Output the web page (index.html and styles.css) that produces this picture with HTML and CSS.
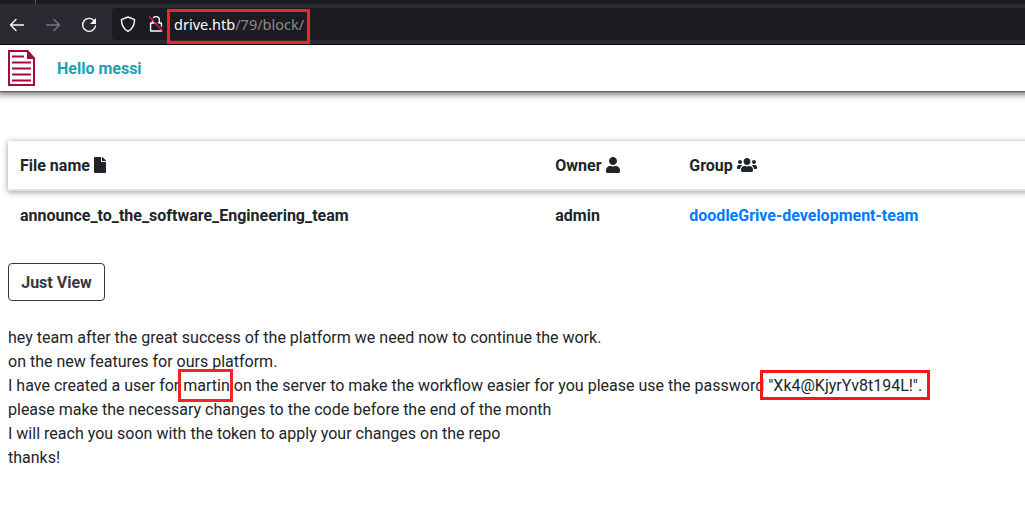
FILE: index.html
```html
<!DOCTYPE html>
<html lang="en">
<head>
<meta charset="utf-8">
<title>drive.htb/79/block/</title>
<link rel="stylesheet" href="styles.css">
</head>
<body>
<div class="tabstrip"><span class="tab-divider"></span></div>
<header class="toolbar">
  <div class="controls">
    <svg class="icon" viewBox="0 0 16 16"><path d="M14.500 8H1.500M7 2.500 1.500 8l5.500 5.500"/></svg>
    <svg class="icon dim" viewBox="0 0 16 16"><path d="M1.500 8h13M9 2.500 14.500 8l-5.500 5.500"/></svg>
    <svg class="icon" viewBox="0 0 16 16"><path d="M13.600 4.400A6.500 6.500 0 1 0 14.500 9"/><path class="solid" d="M15 1v6H9z"/></svg>
  </div>
  <div class="urlbar">
    <svg class="icon shield" viewBox="0 0 16 16"><path d="M8 1 14.600 3.600C14.500 9 12.500 13.300 8 15.300 3.500 13.300 1.500 9 1.400 3.600Z"/></svg>
    <svg class="icon lock" viewBox="0 0 16 18"><path d="M4.600 8V5a3.400 3.400 0 0 1 6.800 0v3M2.600 8h10.800v8H2.600z"/><path class="gap" d="M2.500 1 15.500 15"/><path class="slash" d="M1.500 2 14.500 16"/></svg>
    <span class="url"><b>drive.htb</b>/79/block/<i class="mark mark-url"></i></span>
  </div>
</header>
<nav class="nav">
  <svg class="logo" viewBox="0 0 28 36"><path class="sheet" d="M1 1h18l7 8v26H1z"/><path class="fold" d="M19 0h1l7 8v1h-8z"/><path class="rules" d="M4 6.500h12M4 12.500h19M4 18.500h19M4 24.500h19M4 30.500h19"/></svg>
  <span class="hello">Hello messi</span>
</nav>
<main class="content">
  <section class="files">
    <div class="row head">
      <span>File name <svg class="fa file" viewBox="0 0 384 512"><path d="M224 136V0H24C10.700 0 0 10.700 0 24v464c0 13.300 10.700 24 24 24h336c13.300 0 24-10.700 24-24V160H248c-13.200 0-24-10.800-24-24zm160-14.100v6.100H256V0h6.100c6.400 0 12.500 2.500 17 7l97.900 98c4.500 4.500 7 10.600 7 16.900z"/></svg></span>
      <span>Owner <svg class="fa user" viewBox="0 0 448 512"><path d="M224 256c70.700 0 128-57.300 128-128S294.700 0 224 0 96 57.300 96 128s57.300 128 128 128zm89.600 32h-16.700c-22.200 10.200-46.900 16-72.900 16s-50.600-5.800-72.900-16h-16.700C60.200 288 0 348.200 0 422.400V464c0 26.500 21.500 48 48 48h352c26.500 0 48-21.500 48-48v-41.600c0-74.200-60.200-134.400-134.400-134.400z"/></svg></span>
      <span>Group <svg class="fa users" viewBox="0 0 640 512"><path d="M96 224c35.300 0 64-28.700 64-64s-28.700-64-64-64-64 28.700-64 64 28.700 64 64 64zm448 0c35.300 0 64-28.700 64-64s-28.700-64-64-64-64 28.700-64 64 28.700 64 64 64zm32 32h-64c-17.600 0-33.500 7.100-45.100 18.600 40.300 22.100 68.900 62 75.100 109.400h66c17.700 0 32-14.300 32-32v-32c0-35.300-28.700-64-64-64zm-256 0c61.900 0 112-50.100 112-112S381.900 32 320 32 208 82.100 208 144s50.100 112 112 112zm76.800 32h-8.300c-20.800 10-43.900 16-68.500 16s-47.600-6-68.500-16h-8.300C179.600 288 128 339.600 128 403.200V432c0 26.500 21.500 48 48 48h288c26.500 0 48-21.500 48-48v-28.800c0-63.600-51.600-115.200-115.200-115.200zm-223.700-13.400C161.500 263.100 145.600 256 128 256H64c-35.300 0-64 28.700-64 64v32c0 17.700 14.300 32 32 32h65.900c6.300-47.400 34.900-87.300 75.200-109.400z"/></svg></span>
    </div>
    <div class="row">
      <span>announce_to_the_software_Engineering_team</span>
      <span>admin</span>
      <a class="group">doodleGrive-development-team</a>
    </div>
  </section>
  <button class="view">Just View</button>
  <div class="message">
    <p>hey team after the great success of the platform we need now to continue the work.</p>
    <p>on the new features for ours platform.</p>
    <p>I have created a user for <span class="target">martin<i class="mark mark-user"></i></span> on the server to make the workflow easier for you please use the password <span class="target">"Xk4@KjyrYv8t194L!".<i class="mark mark-pass"></i></span></p>
    <p>please make the necessary changes to the code before the end of the month</p>
    <p>I will reach you soon with the token to apply your changes on the repo</p>
    <p>thanks!</p>
  </div>
</main>
</body>
</html>
```
FILE: styles.css
```css
* { box-sizing: border-box; }
body {
  margin: 0;
  height: 520px;
  overflow: hidden;
  background: #fff;
  color: #212529;
  font: 16px/24px Roboto, "Liberation Sans", sans-serif;
}
.tabstrip { height: 4px; background: #1c1b22; padding-left: 35px; }
.tab-divider { display: block; width: 1px; height: 4px; background: #5b5a62; }
.toolbar {
  height: 41px;
  display: flex;
  background: #2b2a33;
  border-bottom: 1px solid #0c0c0d;
}
.controls { width: 112px; display: flex; gap: 20px; padding: 13px 0 0 9px; }
.icon {
  flex: none;
  width: 16px;
  height: 16px;
  fill: none;
  stroke: #fbfbfe;
  stroke-width: 1.4;
  stroke-linecap: round;
  stroke-linejoin: round;
}
.dim { stroke: #77767d; }
.solid { fill: #fbfbfe; stroke: none; }
.gap { stroke: #1c1b22; }
.slash { stroke: #e2144a; }
.urlbar {
  flex: 1;
  height: 32px;
  margin-top: 4px;
  display: flex;
  align-items: center;
  background: #1c1b22;
  border-radius: 4px 0 0 4px;
  padding-left: 8px;
}
.lock { height: 18px; margin-left: 12px; }
.url {
  position: relative;
  margin-left: 10px;
  font: 14.5px/20px "Noto Sans", sans-serif;
  color: #8a8991;
}
.url b { font-weight: 400; color: #fbfbfe; }
.nav {
  height: 46px;
  display: flex;
  margin-right: -20px;
  padding-left: 8px;
  background: #fff;
  box-shadow: -4px 2px 8px rgba(0, 0, 0, .75), 0 1px 1px rgba(0, 0, 0, .25);
  clip-path: inset(0 0 -20px 0);
}
.logo { width: 28px; height: 36px; margin-top: 5px; fill: none; }
.sheet { stroke: #a6093d; stroke-width: 2; }
.fold { fill: #a6093d; }
.rules { stroke: #a6093d; stroke-width: 2; }
.hello { margin: 12px 0 0 21px; color: #17a2b8; font-weight: 700; }
.content { padding: 50px 0 0 8px; }
.files { margin-right: -20px; }
.row {
  display: grid;
  grid-template-columns: 535.3px 134px 1fr;
  padding: 13px 12px 11px;
  font-weight: 700;
}
.head {
  height: 50px;
  border-bottom: 2px solid #dee2e6;
  box-shadow: 0 1px 6px rgba(0, 0, 0, .42);
}
.fa { height: 16px; vertical-align: -2px; fill: #212529; }
.file { width: 12px; }
.user { width: 14px; }
.users { width: 20px; }
.group { color: #007bff; }
.view {
  display: block;
  width: 97px;
  height: 38px;
  margin-top: 24px;
  padding: 2px 0 0;
  border: 1px solid #343a40;
  border-radius: 4px;
  background: transparent;
  color: #343a40;
  font: 700 16px/24px Roboto, sans-serif;
}
.message { margin-top: 25px; white-space: nowrap; word-spacing: .03px; }
.message p { margin: 0; }
.target { position: relative; }
.mark { position: absolute; border: 3px solid #f12528; }
.mark-url { left: -7px; top: -5px; width: 143px; height: 35px; }
.mark-user { left: -5px; top: -7px; width: 55px; height: 33px; }
.mark-pass { left: -8px; top: -6px; width: 170px; height: 30px; border-color: #f9161a; }
```
